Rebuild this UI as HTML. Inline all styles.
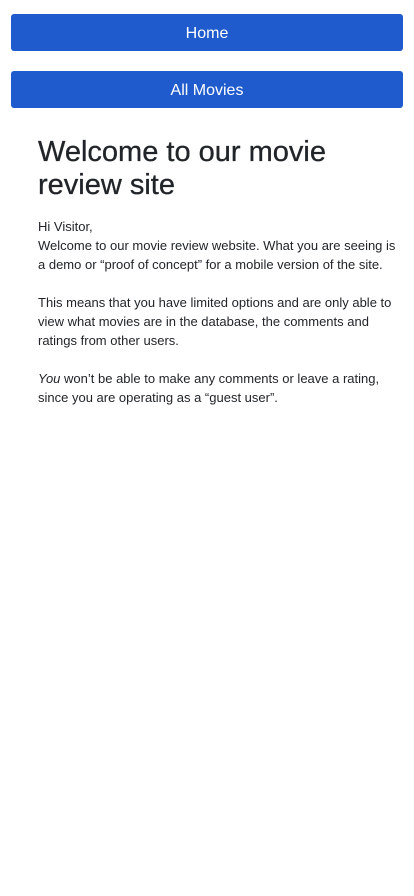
<!DOCTYPE html>
<html><head><meta charset="utf-8"><style>
body{margin:0;background:#fff;font-family:"Liberation Sans",Arial,sans-serif;color:#212529;width:414px;height:896px;overflow:hidden;position:relative}
.btn{position:absolute;left:11px;width:392px;height:37px;background:#1f5bcc;border-radius:3px;color:#fff;font-size:16px;line-height:40px;text-align:center}
h1{position:absolute;left:38px;top:136px;margin:0;font-size:29px;font-weight:normal;line-height:33px;width:340px;color:#212529;-webkit-text-stroke:0.3px #212529}
.p{position:absolute;left:38px;top:217px;font-size:13px;line-height:19px;width:370px;color:#212529}
</style></head><body>
<div class="btn" style="top:14px">Home</div>
<div class="btn" style="top:71px">All Movies</div>
<h1>Welcome to our movie review site</h1>
<div class="p">Hi Visitor,<br>Welcome to our movie review website. What you are seeing is<br>a demo or “proof of concept” for a mobile version of the site.<br><br>This means that you have limited options and are only able to<br>view what movies are in the database, the comments and<br>ratings from other users.<br><br><i>You</i> won’t be able to make any comments or leave a rating,<br>since you are operating as a “guest user”.</div>
</body></html>
